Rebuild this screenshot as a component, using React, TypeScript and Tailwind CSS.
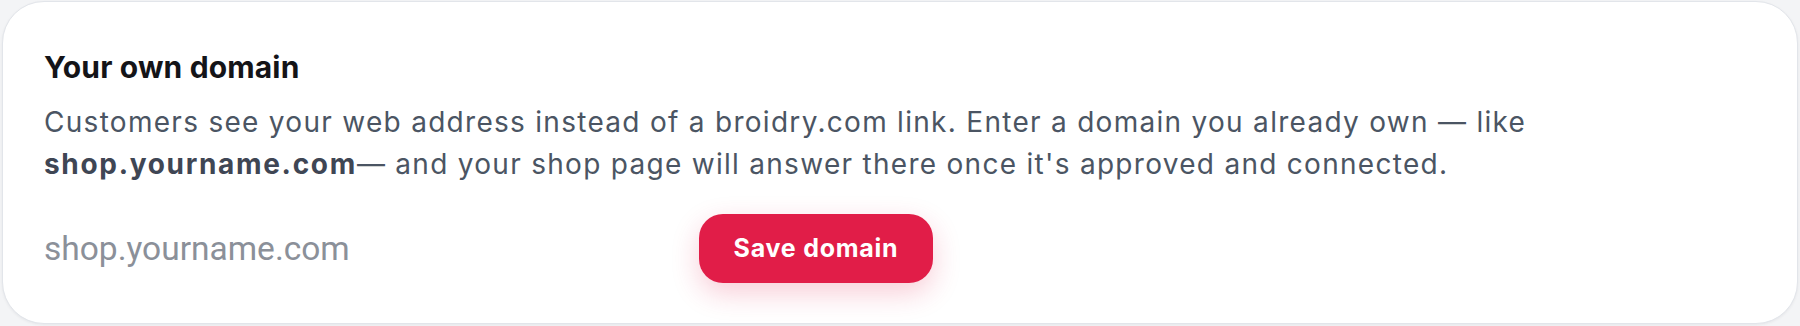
export default function App() {
  return (
    <div className="min-h-[326px] w-full bg-[#f3f4f6] pl-[2px] pr-[2px] pt-px pb-[2px]">
      <section className="rounded-[42px] border border-[#e2e5ea] bg-white pl-[41px] pr-10 pt-[47px] pb-10 shadow-[0_1px_3px_rgba(15,23,42,0.06)] font-['Inter',sans-serif]">
        <h2 className="text-[30px] leading-[36px] font-bold tracking-[0.005em] text-[#141418]">
          Your own domain
        </h2>
        <p className="mt-4 max-w-[1660px] text-[28px] leading-[42px] tracking-[0.046em] text-[#4b5563]">
          Customers see your web address instead of a broidry.com link. Enter a domain you already own — like{" "}
          <strong className="font-bold tracking-[0.06em] text-[#3f4654]">shop.yourname.com</strong>— and your shop page
          will answer there once it's approved and connected.
        </p>

        <div className="mt-[29px] flex items-center gap-[18px]">
          <input
            type="text"
            placeholder="shop.yourname.com"
            className="w-[637px] border-0 bg-transparent p-0 text-[33.5px] leading-[40px] text-[#374151] outline-none placeholder:text-[#8b9099] font-['Roboto',sans-serif]"
          />
          <button
            type="button"
            className="h-[69px] w-[234px] rounded-[24px] bg-[#e11d48] text-[25px] font-bold tracking-[0.03em] text-white shadow-[0_10px_28px_rgba(225,29,72,0.22)]"
          >
            Save domain
          </button>
        </div>
      </section>
    </div>
  );
}
